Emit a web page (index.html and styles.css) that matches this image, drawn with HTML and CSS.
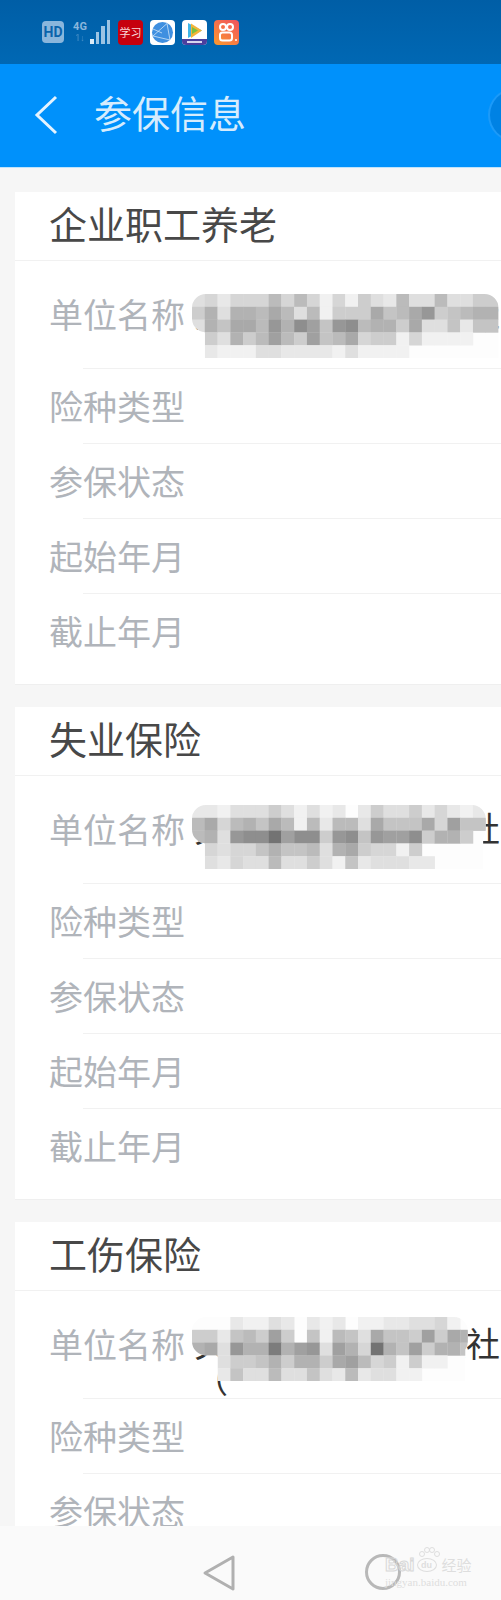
FILE: index.html
```html
<!DOCTYPE html>
<html lang="zh-CN">
<head>
    <meta charset="UTF-8">
    <meta name="viewport" content="width=device-width, initial-scale=1.0">
    <title>参保信息</title>
    <link rel="stylesheet" href="styles.css">
</head>
<body>
    <div class="status-bar">
        <span class="hd-badge">HD</span>
        <div class="network">
            <span class="net-4g">4G</span>
            <span class="net-speed">1↓</span>
        </div>
        <div class="signal">
            <i class="bar-1"></i><i class="bar-2"></i><i class="bar-3"></i><i class="bar-4"></i>
        </div>
        <div class="app-icons">
            <span class="app app-xuexi">学习</span>
            <span class="app app-globe">
                <svg viewBox="0 0 25 25" width="25" height="25">
                    <circle cx="12.5" cy="12.5" r="10.5" fill="#3f8fe0"/>
                    <path d="M3 16 L17 3.5 M17 3.5 L20 20 M3 16 L20 20 M3 9 L12 13" fill="none" stroke="#cfe4f8" stroke-width="0.8"/>
                </svg>
            </span>
            <span class="app app-video">
                <svg viewBox="0 0 25 25" width="25" height="25">
                    <path d="M6 3 L20 10.5 L6 18 Z" fill="#3fb6e8"/>
                    <path d="M9 3.5 L20 10.5 L9 18 Z" fill="#f4b43a"/>
                    <path d="M10 7 L16 10.5 L10 14 Z" fill="#7ac142"/>
                    <rect x="0" y="19" width="25" height="6" fill="#4b3f9e"/>
                    <rect x="5" y="21" width="15" height="2" fill="#d8d6ee"/>
                </svg>
            </span>
            <span class="app app-kwai">
                <svg viewBox="0 0 25 25" width="25" height="25">
                    <g fill="none" stroke="#fff" stroke-width="2">
                        <circle cx="9" cy="7" r="3"/>
                        <circle cx="16" cy="7" r="3"/>
                        <rect x="6" y="12.5" width="12" height="8" rx="2.5"/>
                    </g>
                    <circle cx="22" cy="20" r="1" fill="#fff"/>
                </svg>
            </span>
        </div>
    </div>

    <header class="app-header">
        <svg class="back-icon" viewBox="0 0 26 42" width="26" height="42">
            <path d="M23 3 L4 21 L23 39" fill="none" stroke="#e4f3ff" stroke-width="3"/>
        </svg>
        <h1>参保信息</h1>
        <span class="header-circle"></span>
    </header>

    <main class="content">
        <section class="card">
            <h2>企业职工养老</h2>
            <div class="row row-tall">
                <span class="label">单位名称</span>
                <span class="value">关某某某某某某某社</span>
                <svg class="mosaic mosaic-1" id="mosaic-1"></svg>
            </div>
            <div class="row"><span class="label">险种类型</span></div>
            <div class="row"><span class="label">参保状态</span></div>
            <div class="row"><span class="label">起始年月</span></div>
            <div class="row"><span class="label">截止年月</span></div>
        </section>

        <section class="card">
            <h2>失业保险</h2>
            <div class="row row-tall">
                <span class="label">单位名称</span>
                <span class="value">关某某某某某某某社</span>
                <svg class="mosaic mosaic-2" id="mosaic-2"></svg>
            </div>
            <div class="row"><span class="label">险种类型</span></div>
            <div class="row"><span class="label">参保状态</span></div>
            <div class="row"><span class="label">起始年月</span></div>
            <div class="row"><span class="label">截止年月</span></div>
        </section>

        <section class="card">
            <h2>工伤保险</h2>
            <div class="row row-tall">
                <span class="label">单位名称</span>
                <span class="value">关某某某某某某某社（</span>
                <svg class="mosaic mosaic-3" id="mosaic-3"></svg>
            </div>
            <div class="row"><span class="label">险种类型</span></div>
            <div class="row"><span class="label">参保状态</span></div>
        </section>
    </main>

    <nav class="nav-bar">
        <svg class="nav-back" viewBox="0 0 36 38" width="36" height="38">
            <path d="M32 3 L4 19 L32 35 Z" fill="none" stroke="#b0b0b0" stroke-width="3" stroke-linejoin="round"/>
        </svg>
        <span class="nav-home"></span>
        <div class="watermark">
            <svg class="paw-toes" viewBox="0 0 22 12" width="22" height="12">
                <g fill="none" stroke="#dedede">
                    <circle cx="4" cy="8" r="2.5"/>
                    <circle cx="9" cy="4" r="2.5"/>
                    <circle cx="14" cy="4" r="2.5"/>
                    <circle cx="19" cy="8" r="2.5"/>
                </g>
            </svg>
            <div class="watermark-top">
                <span class="watermark-bai">Bai</span>
                <span class="paw">du</span>
                <span class="watermark-cn">经验</span>
            </div>
            <div class="watermark-url">jingyan.baidu.com</div>
        </div>
    </nav>

    <script src="mosaic.js"></script>
</body>
</html>
```

FILE: styles.css
```css
:root {
    --label-color: #b0b4ba;
    --title-color: #484848;
    --line-color: #f1f1f1;
    --page-bg: #f6f6f6;
}

* {
    margin: 0;
    padding: 0;
    box-sizing: border-box;
}

body {
    width: 501px;
    height: 1600px;
    display: flex;
    flex-direction: column;
    overflow: hidden;
    background: var(--page-bg);
    font-family: "Noto Sans CJK SC", "Noto Sans", sans-serif;
}

/* Status bar */
.status-bar {
    height: 64px;
    flex: none;
    display: flex;
    align-items: center;
    padding-left: 42px;
    background: linear-gradient(#005ea6, #0068b4);
    color: #8ab6dc;
}

.hd-badge {
    width: 22px;
    height: 22px;
    border-radius: 4px;
    background: #8ab6dc;
    color: #0a63ab;
    font: bold 14px/22px "Roboto", sans-serif;
    text-align: center;
}

.network {
    width: 14px;
    margin-left: 9px;
    display: flex;
    flex-direction: column;
    align-items: center;
}

.net-4g {
    font: bold 11px/13px "Roboto", sans-serif;
}

.net-speed {
    font: 9px/11px "Roboto", sans-serif;
    opacity: 0.55;
}

.signal {
    display: flex;
    align-items: flex-end;
    gap: 2px;
    height: 24px;
    margin-left: 3px;
}

.signal i {
    display: block;
    width: 3.5px;
    background: #9cc4e4;
}

.bar-1 { height: 5px; background: #dcebf7 !important; }
.bar-2 { height: 12px; }
.bar-3 { height: 18px; }
.bar-4 { height: 24px; }

.app-icons {
    display: flex;
    gap: 7px;
    margin-left: 8px;
}

.app {
    display: block;
    width: 25px;
    height: 25px;
    border-radius: 4px;
    overflow: hidden;
    background: #fff;
}

.app-xuexi {
    background: #c6000e;
    color: #f7d9d9;
    font-size: 11px;
    line-height: 25px;
    text-align: center;
    white-space: nowrap;
}

.app-kwai {
    background: linear-gradient(35deg, #fb9a2e, #f0525f);
}

/* Header */
.app-header {
    position: relative;
    height: 104px;
    flex: none;
    display: flex;
    align-items: center;
    padding: 0 0 2px 33px;
    overflow: hidden;
    background: #0091fb;
    border-bottom: 1px solid #bfe3fb;
}

.back-icon {
    flex: none;
}

.app-header h1 {
    margin: -6px 0 0 35px;
    font-size: 38px;
    font-weight: 400;
    line-height: 50px;
    color: #d6ecfd;
}

.header-circle {
    position: absolute;
    left: 490px;
    top: 26px;
    width: 50px;
    height: 50px;
    border-radius: 50%;
    background: #0082e4;
    box-shadow: 0 0 0 2px #1c9af8;
}

/* Cards */
.content {
    flex: 1;
    min-height: 0;
    overflow: hidden;
    padding: 24px 0 0 15px;
    display: flex;
    flex-direction: column;
    gap: 22px;
}

.card {
    flex: none;
    background: #ffffff;
    padding-bottom: 15px;
    border-bottom: 1px solid #efefef;
}

.card h2 {
    height: 69px;
    padding-left: 34px;
    font-size: 38px;
    font-weight: 400;
    line-height: 62px;
    color: var(--title-color);
    border-bottom: 1px solid var(--line-color);
}

.row {
    position: relative;
    height: 75px;
    display: flex;
    align-items: center;
    padding: 0 0 2px 34px;
}

.row::after {
    content: "";
    position: absolute;
    left: 68px;
    right: 0;
    bottom: 0;
    border-bottom: 1px solid var(--line-color);
}

.row:last-child::after {
    display: none;
}

.row-tall {
    height: 108px;
    align-items: flex-start;
    padding-top: 34px;
}

.label {
    flex: none;
    font-size: 34px;
    line-height: 38px;
    color: var(--label-color);
}

.value {
    width: 306px;
    margin-left: 9px;
    font-size: 34px;
    line-height: 36px;
    color: #333333;
}

.mosaic {
    position: absolute;
    left: 177px;
    width: 307px;
    height: 64px;
    filter: blur(0.6px);
}

.mosaic-1 { top: 33px; }
.mosaic-2 { top: 29px; }
.mosaic-3 { top: 26px; }

/* Bottom navigation */
.nav-bar {
    position: relative;
    height: 74px;
    flex: none;
    background: #fafafa;
}

.nav-back {
    position: absolute;
    left: 201px;
    top: 28px;
}

.nav-home {
    position: absolute;
    left: 365px;
    top: 28px;
    width: 36px;
    height: 36px;
    border: 3px solid #b8b8b8;
    border-radius: 50%;
}

.watermark {
    position: absolute;
    left: 385px;
    top: 20px;
    width: 90px;
    color: #dedede;
}

.paw-toes {
    display: block;
    margin: 0 0 -4px 33px;
}

.watermark-top {
    display: flex;
    align-items: center;
    gap: 2px;
    font: bold 19px/22px "Liberation Sans", sans-serif;
}

.watermark-bai {
    color: transparent;
    -webkit-text-stroke: 1px #d8d8d8;
}

.paw {
    width: 20px;
    height: 14px;
    border: 1px solid #dedede;
    border-radius: 50%;
    font-size: 9px;
    line-height: 12px;
    text-align: center;
}

.watermark-cn {
    margin-left: 3px;
    font: 15px/22px "Noto Sans CJK SC", sans-serif;
}

.watermark-url {
    font: 11px/12px "Liberation Serif", serif;
    white-space: nowrap;
}
```

FILE: mosaic.js
```js
// pixelated cover over the company name, one hex digit per cell (0 = white, f = darkest)
const CELL_W = 12.77;
const CELL_H = 12.8;

const mosaics = {
    'mosaic-1': {
        cols: 24, lowFrom: 1, lowTo: 24,
        rows: [
            '342444747414153273373355',
            '583887973715559679b56788',
            '386997b8ca6bc78859336266',
            '053857a75a67945514111100',
            '021113322221311110000000'
        ]
    },
    'mosaic-2': {
        cols: 23, lowFrom: 1, lowTo: 22.8,
        rows: [
            '221333531312025335242120',
            '79478697172773966694a668',
            '783bccfacc5bc6baac58850',
            '043446866738954415000000',
            '032433733531623332200000'
        ]
    },
    'mosaic-3': {
        cols: 21.6, lowFrom: 2, lowTo: 21.4,
        rows: [
            '000211320212011223341000',
            '552675a50617639665a59840',
            '893b88e8ab3a84f86a588600',
            '003556858859a74515110000',
            '002633733632723311000000'
        ]
    }
};

const SVG_NS = 'http://www.w3.org/2000/svg';

function svgEl(name, attrs) {
    const el = document.createElementNS(SVG_NS, name);
    Object.keys(attrs).forEach(key => el.setAttribute(key, attrs[key]));
    return el;
}

function drawMosaic(id, data) {
    const svg = document.getElementById(id);
    const clipId = id + '-clip';
    const width = data.cols * CELL_W;
    svg.setAttribute('viewBox', '0 0 307 64');

    // rounded band for the top three rows, a narrower one for the last two
    const clip = svgEl('clipPath', { id: clipId });
    clip.appendChild(svgEl('rect', { x: 0, y: 0, width: width, height: CELL_H * 3, rx: 14 }));
    clip.appendChild(svgEl('rect', {
        x: data.lowFrom * CELL_W,
        y: CELL_H * 2,
        width: (data.lowTo - data.lowFrom) * CELL_W,
        height: CELL_H * 3
    }));

    const group = svgEl('g', { 'clip-path': `url(#${clipId})` });
    group.appendChild(svgEl('rect', { x: 0, y: 0, width: 307, height: 64, fill: '#fdfdfd' }));

    data.rows.forEach((row, r) => {
        [...row].forEach((digit, c) => {
            const shade = parseInt(digit, 16);
            if (!shade) return;
            const gray = 250 - shade * 9;
            group.appendChild(svgEl('rect', {
                x: c * CELL_W,
                y: r * CELL_H,
                width: CELL_W + 0.3,
                height: CELL_H + 0.3,
                fill: `rgb(${gray},${gray},${gray})`
            }));
        });
    });

    svg.appendChild(clip);
    svg.appendChild(group);
}

Object.keys(mosaics).forEach(id => drawMosaic(id, mosaics[id]));
```
